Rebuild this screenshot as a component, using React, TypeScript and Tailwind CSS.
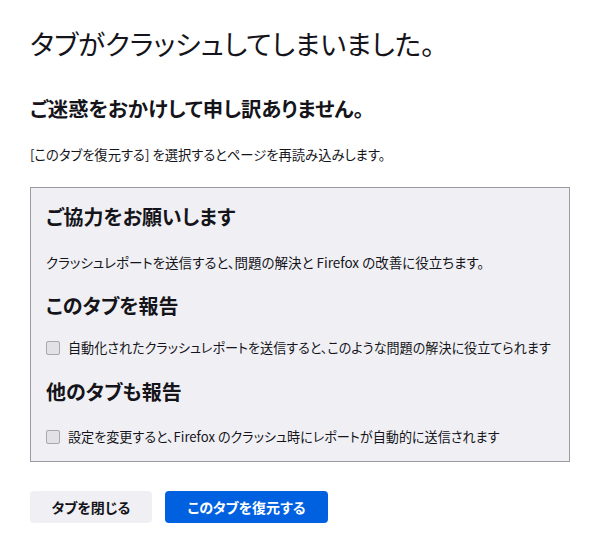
const font = "font-['Noto_Sans_CJK_JP','Noto_Sans',sans-serif] [font-feature-settings:'palt']";

function ReportSection({ title, children }: { title: string; children: React.ReactNode }) {
  return (
    <section className="flex flex-col">
      <h3 className="text-[20px] font-bold leading-[28px]">{title}</h3>
      {children}
    </section>
  );
}

function CheckRow({ label, className }: { label: string; className?: string }) {
  return (
    <label className={`flex items-center gap-2 whitespace-nowrap text-[13.1px] leading-[20px] ${className ?? ''}`}>
      <span className="h-[14px] w-[14px] shrink-0 rounded-[2px] border border-[#a8a8b0] bg-[#e1e1e6]" />
      <span>{label}</span>
    </label>
  );
}

export default function App() {
  return (
    <div className={`${font} min-h-[546px] bg-white px-[30px] pt-[23px] text-[#15141a]`}>
      <h1 className="text-[27.5px] font-normal leading-[40px]">タブがクラッシュしてしまいました。</h1>
      <h2 className="mt-[31px] text-[20.4px] font-bold leading-[28px]">ご迷惑をおかけして申し訳ありません。</h2>
      <p className="mt-[23px] text-[13.3px] leading-[20px]">
        [このタブを復元する] を選択するとページを再読み込みします。
      </p>

      <div className="mt-[22px] w-[540px] border border-[#9a9aa2] bg-[#f0f0f4] px-[15px] pb-[14px] pt-[15px]">
        <ReportSection title="ご協力をお願いします">
          <p className="mt-[21px] text-[13.5px] leading-[20px]">
            クラッシュレポートを送信すると、問題の解決と Firefox の改善に役立ちます。
          </p>
        </ReportSection>
        <div className="mt-[20px]">
          <ReportSection title="このタブを報告">
            <CheckRow className="mt-[18px]" label="自動化されたクラッシュレポートを送信すると、このような問題の解決に役立てられます" />
          </ReportSection>
        </div>
        <div className="mt-[20px]">
          <ReportSection title="他のタブも報告">
            <CheckRow className="mt-[21px]" label="設定を変更すると、Firefox のクラッシュ時にレポートが自動的に送信されます" />
          </ReportSection>
        </div>
      </div>

      <div className="mt-[29px] flex gap-[13px]">
        <button className="h-[32px] w-[122px] rounded-[4px] bg-[#f0f0f4] text-[14px] font-bold">タブを閉じる</button>
        <button className="h-[32px] w-[163px] rounded-[4px] bg-[#0061e0] text-[14px] font-bold text-white">
          このタブを復元する
        </button>
      </div>
    </div>
  );
}
